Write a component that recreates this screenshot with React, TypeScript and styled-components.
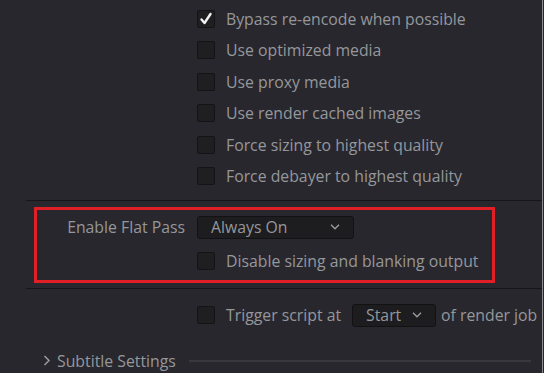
import React from "react";
import styled, { createGlobalStyle } from "styled-components";

const GlobalStyle = createGlobalStyle`
  html, body {
    margin: 0;
    padding: 0;
    background: #28272d;
  }
  body {
    font-family: "Open Sans", "DejaVu Sans", sans-serif;
    color: #95979b;
  }
`;

const Panel = styled.div`
  width: 542px;
  height: 373px;
  overflow: hidden;
  background: #28272d;
  border-right: 1px solid #8a8a8e;
  font-size: 15.8px;
`;

const OptionList = styled.div`
  padding: 3.3px 0 0 197px;
`;

const OptionRow = styled.label`
  display: flex;
  align-items: center;
  height: 31.4px;
  gap: 11px;
  white-space: nowrap;
`;

const Box = styled.span<{ $checked?: boolean }>`
  flex: none;
  display: flex;
  align-items: center;
  justify-content: center;
  width: 16px;
  height: 16px;
  border: 1px solid #141416;
  border-radius: 2px;
  background: #1f1f21;
`;

const Separator = styled.div<{ $top: number }>`
  height: 1px;
  margin: ${(p) => p.$top}px 0 0 26px;
  background: #16161a;
`;

const FlatPassBox = styled.div`
  margin: 6px 0 0 34px;
  width: 455px;
  border: 3px solid #e11f26;
  padding: 6px 0 10px;
  display: grid;
  grid-template-columns: 148px 1fr;
  column-gap: 12px;
  row-gap: 13px;
  align-items: center;
`;

const FieldLabel = styled.span`
  text-align: right;
  white-space: nowrap;
  line-height: 23px;
`;

const Select = styled.div<{ $width: number }>`
  box-sizing: border-box;
  width: ${(p) => p.$width}px;
  height: 23px;
  display: flex;
  align-items: center;
  justify-content: space-between;
  padding: 0 13px 0 13px;
  background: #1d1d20;
  border: 1px solid #121214;
  border-radius: 3px;
  white-space: nowrap;
`;

const InlineCheck = styled.div`
  display: flex;
  align-items: center;
  height: 18px;
  gap: 11px;
  white-space: nowrap;
`;

const TriggerRow = styled.div`
  display: flex;
  align-items: center;
  margin: 15px 0 0 197px;
  height: 23px;
  white-space: nowrap;
`;

const TriggerText = styled.span<{ $before: number }>`
  margin-left: ${(p) => p.$before}px;
`;

const TriggerSelect = styled(Select)`
  margin-left: 11px;
`;

const SectionHeader = styled.div`
  display: flex;
  align-items: center;
  width: 488px;
  margin: 22px 0 0 43px;
  height: 24px;
  gap: 6px;
`;

const HeaderRule = styled.div`
  flex: 1;
  height: 2px;
  margin-left: 7px;
  background: #38383f;
`;

const Check = () => (
  <svg width="14" height="14" viewBox="0 0 14 14">
    <path d="M2.5 7.5 L5.5 11 L11.5 2" fill="none" stroke="#f2f2f2" strokeWidth="2.4" strokeLinecap="round" strokeLinejoin="round" />
  </svg>
);

const Chevron = () => (
  <svg width="10" height="6" viewBox="0 0 10 6">
    <path d="M1 0.8 L5 4.8 L9 0.8" fill="none" stroke="#9a9a9e" strokeWidth="1.4" />
  </svg>
);

const RightChevron = () => (
  <svg width="8" height="11" viewBox="0 0 8 11">
    <path d="M1.5 1 L6 5.5 L1.5 10" fill="none" stroke="#9a9a9e" strokeWidth="1.5" />
  </svg>
);

const CheckBox = ({ checked }: { checked?: boolean }) => (
  <Box $checked={checked}>{checked && <Check />}</Box>
);

const options = [
  { label: "Bypass re-encode when possible", checked: true },
  { label: "Use optimized media" },
  { label: "Use proxy media" },
  { label: "Use render cached images" },
  { label: "Force sizing to highest quality" },
  { label: "Force debayer to highest quality" },
];

export default function App() {
  return (
    <Panel>
      <GlobalStyle />
      <OptionList>
        {options.map((o) => (
          <OptionRow key={o.label}>
            <CheckBox checked={o.checked} />
            {o.label}
          </OptionRow>
        ))}
      </OptionList>
      <Separator $top={8} />
      <FlatPassBox>
        <FieldLabel>Enable Flat Pass</FieldLabel>
        <Select $width={157}>
          Always On
          <Chevron />
        </Select>
        <span />
        <InlineCheck>
          <CheckBox />
          Disable sizing and blanking output
        </InlineCheck>
      </FlatPassBox>
      <Separator $top={5} />
      <TriggerRow>
        <CheckBox />
        <TriggerText $before={11}>Trigger script at</TriggerText>
        <TriggerSelect $width={84}>
          Start
          <Chevron />
        </TriggerSelect>
        <TriggerText $before={5}>of render job</TriggerText>
      </TriggerRow>
      <SectionHeader>
        <RightChevron />
        Subtitle Settings
        <HeaderRule />
      </SectionHeader>
    </Panel>
  );
}
